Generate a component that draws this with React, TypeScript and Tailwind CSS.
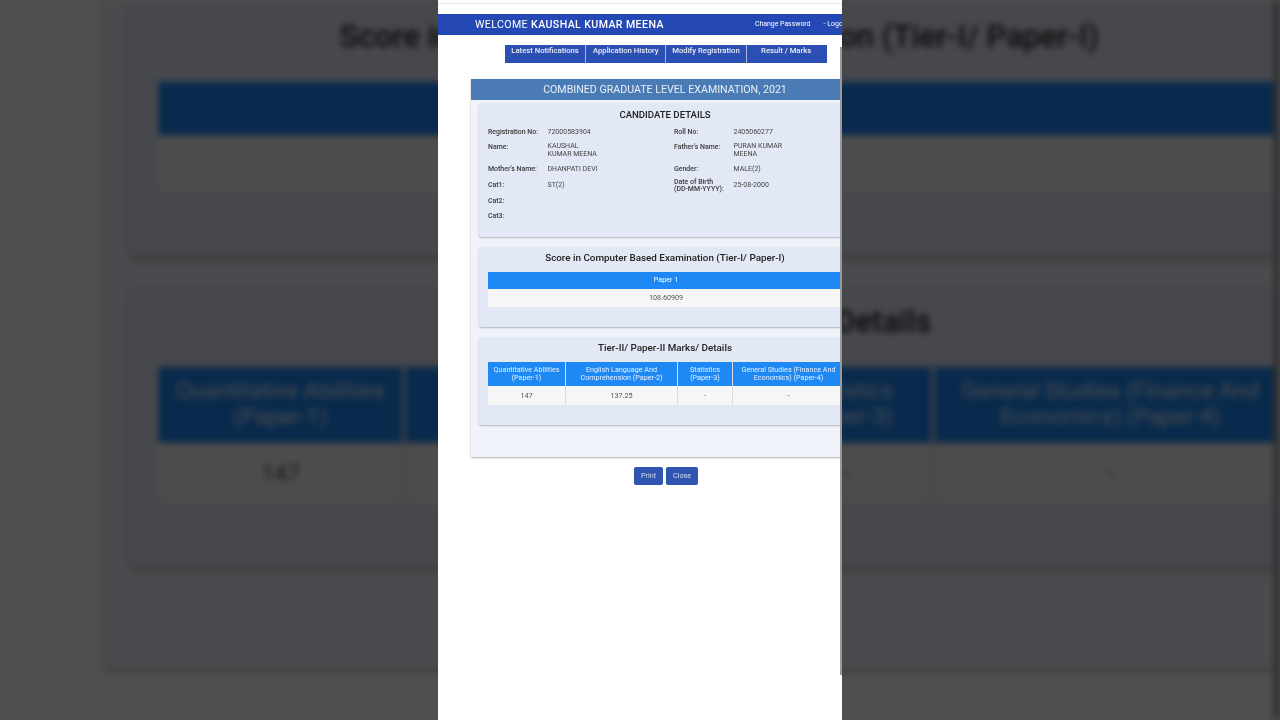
const navItems = ["Latest Notifications", "Application History", "Modify Registration", "Result / Marks"];

const details = [
  { label: "Registration No:", value: ["72000583904"], label2: ["Roll No:"], value2: ["2405060277"], height: "h-[14px]" },
  { label: "Name:", value: ["KAUSHAL", "KUMAR MEENA"], label2: ["Father's Name:"], value2: ["PURAN KUMAR", "MEENA"], height: "h-[23px]", labelClass: "pt-[1.5px]" },
  { label: "Mother's Name:", value: ["DHANPATI DEVI"], label2: ["Gender:"], value2: ["MALE(2)"], height: "h-[16px]" },
  { label: "Cat1:", value: ["ST(2)"], label2: ["Date of Birth", "(DD-MM-YYYY):"], value2: ["25-08-2000"], height: "h-[16px]", label2Class: "-mt-[2px]" },
  { label: "Cat2:", value: [], label2: [], value2: [], height: "h-[15.5px]" },
  { label: "Cat3:", value: [], label2: [], value2: [], height: "h-[15.5px]" },
];

const tierTwo = [
  { head: ["Quantitative Abilities", "(Paper-1)"], value: "147", width: "w-[77px]" },
  { head: ["English Language And", "Comprehension (Paper-2)"], value: "137.25", width: "w-[112px]" },
  { head: ["Statistics", "(Paper-3)"], value: "-", width: "w-[55px]" },
  { head: ["General Studies (Finance And", "Economics) (Paper-4)"], value: "-", width: "w-[112px]" },
];

function Page() {
  return (
    <div className="relative h-[720px] w-[404px] overflow-hidden bg-white font-['Roboto',sans-serif]">
      <div className="h-[4px] border-b border-[#e4e4e4]" />

      <div className="mt-[10px] flex h-[21px] items-center bg-[#2549b4] pl-[37px] text-white">
        <span className="w-[280px] shrink-0 whitespace-nowrap text-[10.6px] tracking-[0.4px]">
          WELCOME <span className="font-medium">KAUSHAL KUMAR MEENA</span>
        </span>
        <span className="shrink-0 whitespace-nowrap text-[6.9px]">Change Password</span>
        <span className="ml-[13px] shrink-0 whitespace-nowrap text-[7px]">- Logout</span>
      </div>

      <div className="ml-[67px] mt-[10px] flex h-[18px] w-[322px] bg-[#2c4fb3]">
        {navItems.map((item, i) => (
          <div
            key={item}
            className={`w-[80.2px] whitespace-nowrap pt-[1px] text-center text-[7.7px] font-medium leading-[9px] text-[#e8edf9] ${i > 0 ? "border-l border-[#a9b8e2]" : ""}`}
          >
            {item}
          </div>
        ))}
      </div>

      <div className="ml-[33px] mt-[16px] w-[388px] bg-[#f0f3fa] pb-[32px] shadow-[0_1px_2px_rgba(0,0,0,0.3)]">
        <div className="flex h-[21px] items-center justify-center bg-[#4a7bb5] text-[10.65px] text-[#e9eff8]">
          COMBINED GRADUATE LEVEL EXAMINATION, 2021
        </div>

        <div className="ml-[8px] mt-[3px] h-[134px] w-[372px] rounded-[2px] bg-[#e2e8f6] px-[9px] pt-[6px] shadow-[0_1px_2px_rgba(0,0,0,0.25)]">
          <h2 className="text-center text-[9.6px] font-medium leading-[12px] text-[#222]">CANDIDATE DETAILS</h2>
          <div className="mt-[6.5px] text-[7px] leading-[8px] text-[#444]">
            {details.map((row) => (
              <div key={row.label} className={`flex items-start ${row.height}`}>
                <div className={`w-[59px] whitespace-nowrap text-[6.95px] font-medium text-[#3a3a3a] ${row.labelClass ?? ""}`}>{row.label}</div>
                <div className="w-[127px] pl-[0.5px]">
                  {row.value.map((line) => (
                    <div key={line}>{line}</div>
                  ))}
                </div>
                <div className={`w-[59px] whitespace-nowrap text-[6.95px] font-medium text-[#3a3a3a] ${row.labelClass ?? ""} ${row.label2Class ?? ""}`}>
                  {row.label2.map((line) => (
                    <div key={line} className={row.label2.length > 1 ? "leading-[7.5px]" : "leading-[8px]"}>
                      {line}
                    </div>
                  ))}
                </div>
                <div className="pl-[0.5px]">
                  {row.value2.map((line) => (
                    <div key={line} className="whitespace-nowrap">
                      {line}
                    </div>
                  ))}
                </div>
              </div>
            ))}
          </div>
        </div>

        <div className="ml-[8px] mt-[10px] h-[80px] w-[372px] rounded-[2px] bg-[#e2e8f6] px-[9px] pt-[5px] shadow-[0_1px_2px_rgba(0,0,0,0.25)]">
          <h2 className="text-center text-[9.85px] font-medium leading-[12px] text-[#222]">
            Score in Computer Based Examination (Tier-I/ Paper-I)
          </h2>
          <div className="mt-[8px] w-[356px] text-center text-[7.2px]">
            <div className="flex h-[17px] items-center justify-center bg-[#1e88f5] text-white">Paper 1</div>
            <div className="flex h-[18px] items-center justify-center bg-[#f6f6f6] pt-[1px] text-[#555]">108.60909</div>
          </div>
        </div>

        <div className="ml-[8px] mt-[10px] h-[88px] w-[372px] rounded-[2px] bg-[#e2e8f6] px-[9px] pt-[5px] shadow-[0_1px_2px_rgba(0,0,0,0.25)]">
          <h2 className="text-center text-[9.85px] font-medium leading-[12px] text-[#222]">
            Tier-II/ Paper-II Marks/ Details
          </h2>
          <div className="mt-[8px] flex w-[356px] text-center text-[7.2px]">
            {tierTwo.map((col, i) => (
              <div key={col.head[0]} className={`${col.width} ${i > 0 ? "border-l border-[#dcdcdc]" : ""}`}>
                <div className="flex h-[24px] flex-col justify-center bg-[#1e88f5] leading-[8.5px] text-[#e8f3ff]">
                  {col.head.map((line) => (
                    <div key={line} className="whitespace-nowrap">
                      {line}
                    </div>
                  ))}
                </div>
                <div className="flex h-[19px] items-center justify-center bg-[#f6f6f6] pt-[1.5px] text-[#555]">{col.value}</div>
              </div>
            ))}
          </div>
        </div>
      </div>

      <div className="ml-[196px] mt-[10px] flex gap-[3px] text-[7.2px] text-[#d5def3]">
        <button className="h-[18px] w-[29px] rounded-[2px] bg-[#2f55b0]">Print</button>
        <button className="h-[18px] w-[32px] rounded-[2px] bg-[#2f55b0]">Close</button>
      </div>

      <div className="absolute right-0 top-[47px] h-[628px] w-[2px] bg-[#999]" />
    </div>
  );
}

export default function App() {
  return (
    <div className="relative h-[720px] w-[1280px] overflow-hidden bg-[#4f4f4f]">
      {/* blurred, zoomed copy behind the video frame */}
      <div aria-hidden className="absolute inset-0 overflow-hidden blur-[3px] brightness-[0.31]">
        <div className="origin-top-left [transform:translateY(-780px)_scale(3.168)]">
          <Page />
        </div>
      </div>
      <div className="relative ml-[438px] w-[404px] blur-[0.35px]">
        <Page />
      </div>
    </div>
  );
}
